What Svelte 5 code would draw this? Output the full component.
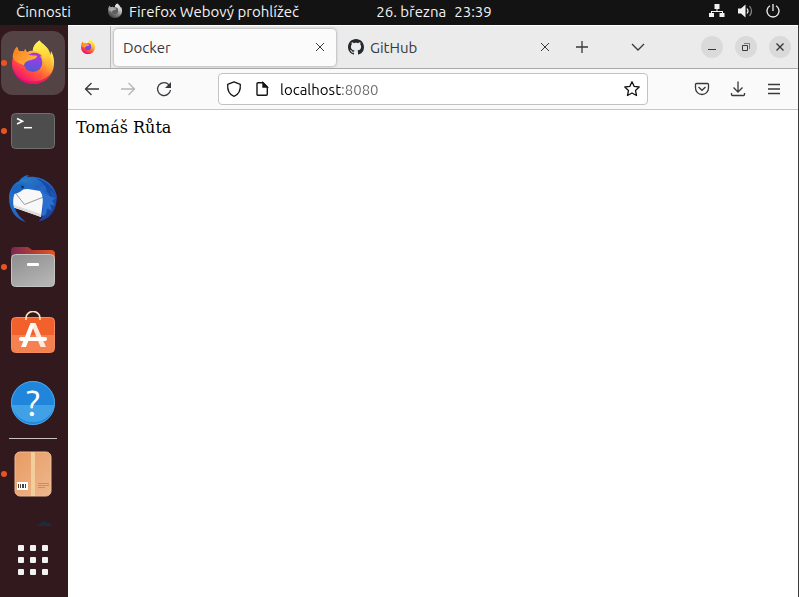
<script>
  let address = $state('localhost:8080');
  const dots = [0, 1, 2, 3, 4, 5, 6, 7, 8];
</script>

{#snippet firefox(size, id)}
  <svg width={size} height={size} viewBox="0 0 48 48" aria-hidden="true">
    <defs>
      <linearGradient id="{id}-body" x1="0.85" y1="0.1" x2="0.25" y2="0.95">
        <stop offset="0.1" stop-color="#fff44f" />
        <stop offset="0.35" stop-color="#ffb035" />
        <stop offset="0.58" stop-color="#ff6b35" />
        <stop offset="0.8" stop-color="#ff3750" />
        <stop offset="1" stop-color="#e8117f" />
      </linearGradient>
      <linearGradient id="{id}-flame" x1="0.4" y1="0" x2="0.6" y2="1">
        <stop offset="0" stop-color="#fff44f" />
        <stop offset="0.5" stop-color="#ffd53d" />
        <stop offset="1" stop-color="#ff9a30" stop-opacity="0" />
      </linearGradient>
      <radialGradient id="{id}-globe" cx="0.65" cy="0.1" r="0.9">
        <stop offset="0" stop-color="#b833e1" />
        <stop offset="0.5" stop-color="#7d47e3" />
        <stop offset="1" stop-color="#5658cf" />
      </radialGradient>
      <linearGradient id="{id}-snout" x1="0" y1="0" x2="1" y2="0.6">
        <stop offset="0" stop-color="#ff7a1c" />
        <stop offset="1" stop-color="#ffb13a" />
      </linearGradient>
    </defs>
    <path fill="url(#{id}-body)" d="M30.500 1.500C33 5 38 7 40 12l1.500 4 .5-4c2.500 4 3.500 9 3 14-1 11-10 19-21 19S3 36 3 24.500c0-4 1-7 3-9.500.2-2.500 1-5 2.700-7 .3 2 .8 3.500 2 4.500 1.800-.5 3.500-.4 5 .2.2-1 .5-1.800 1-2.500.2 1 .7 2 1.500 3 1.500-1 3.500-1.500 5.500-1.400C24 7 27 4 30.500 1.500z" />
    <path fill="#d90b70" opacity=".65" d="M4 30c4 9 11 12.500 20 12.500 8 0 14-3.500 18.500-9C39.500 40.500 32.500 45 24 45 14 45 6 39 4 30z" />
    <path fill="url(#{id}-flame)" d="M30.500 1.500C33 5 38 7 40 12c3 7 2 15-2 20 .5-6-1-11-4.500-14 .5-2-2-4.500-5-5.500l-4.500-.4C24 7 27 4 30.500 1.500z" />
    <circle cx="24" cy="23.700" r="9.300" fill="url(#{id}-globe)" />
    <path fill="#a935dd" d="M21 15c4-2 9-1.500 12 2.500l-2-.3 2 4c-3-3-7-4.500-12-5z" />
    <path fill="url(#{id}-snout)" d="M3.600 18C4 13.500 5.500 10 8 7.500c0 2 .8 3.500 2 4.800 2-.6 3.500-.4 5 .2.2-1 .5-2 1.300-2.800.2 3 1.500 4.500 4.200 6.300 3 .8 7 0 7.500.9 0 2-2 3-4.500 3.600-2 .8-3.500 1-4.500 1.200-2 .8-3.500 2-4 4.500C13 25 6 24 3.600 18z" />
  </svg>
{/snippet}

{#snippet cross(size)}
  <svg width={size} height={size} viewBox="0 0 10 10" fill="none" stroke="currentColor" aria-hidden="true"><path d="M1 1l8 8M9 1L1 9" /></svg>
{/snippet}

<div class="desktop">
  <header class="panel">
    <button class="activities">Činnosti</button>
    <button class="app-menu">
      <span class="grey">{@render firefox(16, 'panel')}</span>
      Firefox Webový prohlížeč
    </button>
    <button class="clock"><span>26. března</span><span>23:39</span></button>
    <button class="status" aria-label="Systém">
      <svg width="16" height="14" viewBox="0 0 16 14" fill="#f2f2f2">
        <path d="M5.500 0h5v5h-5zM0 9h5v4H0zM10.500 9h5v4h-5zM7.500 5h1v2.500h-1zM2 7h12v2h-1V8H3v1H2z" />
      </svg>
      <svg width="15" height="14" viewBox="0 0 15 14" fill="none" stroke="#f2f2f2">
        <path fill="#f2f2f2" stroke="none" d="M0 4.500h3L7.500 0.500v13L3 9.500H0z" />
        <path stroke-width="1.200" d="M9 4.500q2 2.500 0 5" />
        <path stroke="#8b8b8b" stroke-width="1.200" d="M11.500 2q4 5 0 10" />
      </svg>
      <svg width="14" height="14" viewBox="0 0 14 14" fill="none" stroke="#f2f2f2" stroke-width="1.300">
        <path d="M7 0v7M4 1.800a6 6 0 1 0 6 0" />
      </svg>
    </button>
  </header>

  <div class="workspace">
    <nav class="dock" aria-label="Dok">
      <button class="tile running active" aria-label="Firefox">{@render firefox(48, 'dock')}</button>

      <button class="tile running" aria-label="Terminál">
        <svg width="48" height="48" viewBox="0 0 48 48">
          <rect x="2.500" y="6.500" width="43" height="35" rx="4" fill="#4d4d4d" stroke="#6f6f6f" />
          <path d="M8 11.500l5.500 2.700L8 17" fill="none" stroke="#fff" stroke-width="1.600" />
          <path d="M15 20.700h8" stroke="#fff" stroke-width="1.500" />
        </svg>
      </button>

      <button class="tile" aria-label="Thunderbird">
        <svg width="48" height="48" viewBox="0 0 48 48">
          <defs>
            <linearGradient id="bird" x1="0" y1="0" x2="1" y2="1">
              <stop offset="0" stop-color="#1c75cd" />
              <stop offset="0.5" stop-color="#2468c8" />
              <stop offset="1" stop-color="#16328e" />
            </linearGradient>
            <linearGradient id="crest" x1="0" y1="0" x2="1" y2="0.6">
              <stop offset="0" stop-color="#2f7fc4" />
              <stop offset="1" stop-color="#1f5dc0" />
            </linearGradient>
          </defs>
          <path fill="url(#bird)" d="M20 0l-2 2C33 0 46 9 48 22c-.5 3-.5 6-1.500 9-2 8-8 14-17 15.500 2-2 4-4 4-6L6 33c1 5 6 10 11 14C8 45 0 36 0 23 0 15 4 9 10 6c2-3 6-6 10-6z" />
          <path fill="url(#crest)" d="M11 6c9-5 22-3 29 6-5-2-9-1-12 3-4-5-9-7-17-9z" />
          <path fill="#174ba8" d="M27 3.500c8 1 16 7 19 16l-5-4 2 7-5-6c-1-6-5-10-11-13z" />
          <path fill="#f8f8f8" d="M6 17.500c5-2 8-3.500 13-3.500l12 2 3.500 6L32 42 5 32.500c-1.500-5-1-10 1-15z" />
          <path fill="#dcdcdc" d="M5 30l27 9v3L5 32.500z" />
          <path fill="none" stroke="#989898" stroke-width="1" d="M6 17.500L15.500 29.500l19-7.500" />
          <path fill="#2a6fcf" d="M32 15c4 4 9 7 15 8l-4 2.500 3 5-5-1 2 6-5-2-1 6-4.500 2c2-8 2-18-.5-26.500z" />
          <path fill="#1b66c0" d="M3 13c3-4 8-5 13-3-1 5-5 8-12 9z" />
          <circle cx="13.500" cy="12" r="1.300" fill="#222c40" />
        </svg>
      </button>

      <button class="tile running" aria-label="Soubory">
        <svg width="48" height="48" viewBox="0 0 48 48">
          <defs>
            <linearGradient id="folder"><stop offset="0" stop-color="#7a2750" /><stop offset="1" stop-color="#e95420" /></linearGradient>
            <linearGradient id="drawer" x1="0" y1="0" x2="0.6" y2="1"><stop offset="0" stop-color="#8d8d8d" /><stop offset="1" stop-color="#b3b3b3" /></linearGradient>
          </defs>
          <path fill="url(#folder)" d="M2 8a4 4 0 0 1 4-4h13l4 3h19a4 4 0 0 1 4 4v12H2z" />
          <rect x="2.500" y="11.500" width="43" height="32" rx="4" fill="url(#drawer)" stroke="#c4c4c4" />
          <rect x="18" y="20" width="12" height="3" rx="1" fill="#fff" />
        </svg>
      </button>

      <button class="tile" aria-label="Software">
        <svg width="48" height="48" viewBox="0 0 48 48">
          <rect x="2.500" y="6.500" width="43" height="35" rx="4" fill="#f2612b" stroke="#f58a5e" />
          <path fill="#f58050" d="M3 24h42v14a3 3 0 0 1-3 3H6a3 3 0 0 1-3-3z" />
          <path d="M17 9V7a7 6.500 0 0 1 14 0v2" fill="none" stroke="#fbe3b7" stroke-width="1.700" />
          <path d="M22 12h4.500L37 36h-5.500z" fill="#ffe9df" />
          <path d="M21.500 12H26l-9 24h-5z" fill="#fff" />
          <rect x="10" y="26" width="28" height="4" rx="2" fill="#fff" />
        </svg>
      </button>

      <button class="tile" aria-label="Nápověda">
        <svg width="48" height="48" viewBox="0 0 48 48">
          <circle cx="24" cy="24" r="22" fill="#1f86dc" />
          <path d="M2.500 26h43a22 22 0 0 1-43 0z" fill="#41a1e7" />
          <circle cx="24" cy="24" r="21.500" fill="none" stroke="#4ba6e8" />
          <text x="24" y="37" text-anchor="middle" class="question">?</text>
        </svg>
      </button>

      <hr />

      <button class="tile running" aria-label="Balíček">
        <svg width="48" height="48" viewBox="0 0 48 48">
          <defs><linearGradient id="box" x1="0" y1="0" x2="1" y2="1"><stop offset="0" stop-color="#e99b62" /><stop offset="1" stop-color="#edb78e" /></linearGradient></defs>
          <rect x="6" y="2" width="36" height="44" rx="5" fill="url(#box)" stroke="#f0bd95" />
          <path fill="#f2cf9a" d="M22 2h4v44h-4z" />
          <path fill="#fff" d="M8 32h11v8H8z" />
          <path fill="#444" d="M9 34h1v4H9zM11 34h1v4h-1zM13 34h2v4h-2zM16 34h1v4h-1z" />
          <path stroke="#d68a55" d="M29 33.500h11M29 35.500h11M29 37.500h7" />
        </svg>
      </button>

      <div class="peek" aria-hidden="true">
        <svg width="48" height="16" viewBox="0 0 48 16">
          <path fill="#1d2b3e" d="M28 16c2-2 4-3 7-5 2 1 6 2 9 5z" />
        </svg>
      </div>

      <button class="tile apps" aria-label="Zobrazit aplikace">
        {#each dots as dot (dot)}<span></span>{/each}
      </button>
    </nav>

    <section class="browser">
      <div class="tabs">
        <button class="pinned" aria-label="Firefox View">{@render firefox(16, 'view')}</button>
        <div class="tab selected">
          <button class="title">Docker</button>
          <button class="icon small" aria-label="Zavřít panel">{@render cross(10)}</button>
        </div>
        <div class="tab">
          <button class="title">
            <svg width="16" height="16" viewBox="0 0 16 16" fill="#24292f" aria-hidden="true">
              <path d="M8 0C3.580 0 0 3.580 0 8c0 3.540 2.290 6.530 5.470 7.590.4.070.55-.17.55-.38 0-.19-.01-.82-.01-1.490-2.010.37-2.530-.49-2.690-.94-.09-.23-.48-.94-.82-1.130-.28-.15-.68-.52-.01-.53.63-.01 1.080.58 1.230.82.72 1.210 1.870.87 2.330.66.07-.52.28-.87.51-1.070-1.780-.2-3.640-.89-3.640-3.950 0-.87.31-1.590.82-2.150-.08-.2-.36-1.020.08-2.120 0 0 .67-.21 2.200.82.64-.18 1.320-.27 2-.27s1.360.09 2 .27c1.530-1.040 2.200-.82 2.200-.82.44 1.100.16 1.920.08 2.120.51.56.82 1.270.82 2.150 0 3.070-1.870 3.750-3.650 3.950.29.25.54.73.54 1.480 0 1.070-.01 1.930-.01 2.200 0 .21.15.46.55.38A8.010 8.010 0 0 0 16 8c0-4.420-3.580-8-8-8z" />
            </svg>
            GitHub
          </button>
          <button class="icon small" aria-label="Zavřít panel">{@render cross(10)}</button>
        </div>
        <button class="icon new-tab" aria-label="Nový panel">
          <svg width="12" height="12" viewBox="0 0 12 12" fill="none" stroke="currentColor" stroke-width="1.300"><path d="M6 0v12M0 6h12" /></svg>
        </button>
        <button class="icon list-tabs" aria-label="Seznam panelů">
          <svg width="14" height="8" viewBox="0 0 14 8" fill="none" stroke="currentColor" stroke-width="1.300"><path d="M1 1l6 6 6-6" /></svg>
        </button>
        <div class="window-buttons">
          <button aria-label="Minimalizovat">
            <svg width="10" height="10" viewBox="0 0 10 10"><path d="M1 7.500h8" stroke="currentColor" /></svg>
          </button>
          <button aria-label="Obnovit">
            <svg width="10" height="10" viewBox="0 0 10 10" fill="none" stroke="currentColor"><path d="M1.500 3.500h5v5h-5z" /><path d="M3 1.500h5.500V7" opacity=".6" /></svg>
          </button>
          <button aria-label="Zavřít">
            <svg width="10" height="10" viewBox="0 0 10 10" stroke="currentColor" stroke-width="1.400"><path d="M1.500 1.500l7 7M8.500 1.500l-7 7" /></svg>
          </button>
        </div>
      </div>

      <div class="toolbar">
        <div class="group">
          <button class="icon" aria-label="Zpět">
            <svg width="16" height="16" viewBox="0 0 16 16" fill="none" stroke="currentColor" stroke-width="1.300"><path d="M15 8H1.500M7.500 2l-6 6 6 6" /></svg>
          </button>
          <button class="icon" aria-label="Vpřed" disabled>
            <svg width="16" height="16" viewBox="0 0 16 16" fill="none" stroke="currentColor" stroke-width="1.300"><path d="M1 8h13.500M8.500 2l6 6-6 6" /></svg>
          </button>
          <button class="icon" aria-label="Obnovit stránku">
            <svg width="16" height="16" viewBox="0 0 16 16" fill="none" stroke="currentColor" stroke-width="1.300"><path d="M13 3.800A6.500 6.500 0 1 0 14.500 9" /><path fill="currentColor" stroke="none" d="M15 1v6H9z" /></svg>
          </button>
        </div>
        <form class="address" onsubmit={(event) => event.preventDefault()}>
          <button type="button" class="icon" aria-label="Ochrana">
            <svg width="16" height="16" viewBox="0 0 16 16" fill="none" stroke="currentColor" stroke-width="1.300"><path d="M8 .8l6.300 2.500C14.700 8.500 13 13.500 8 15.300 3 13.500 1.300 8.500 1.700 3.300z" stroke-linejoin="round" /></svg>
          </button>
          <button type="button" class="icon" aria-label="Informace o stránce">
            <svg width="16" height="16" viewBox="0 0 16 16" fill="none" stroke="currentColor" stroke-width="1.400"><path d="M4 1.700h5l4.300 4.300v7.200a1 1 0 0 1-1 1H4a1 1 0 0 1-1-1V2.700a1 1 0 0 1 1-1z" /><path fill="currentColor" d="M9 1.700V6h4.300z" /></svg>
          </button>
          <input type="text" aria-label="Adresa" bind:value={address} />
          <button type="button" class="icon" aria-label="Přidat do záložek">
            <svg width="16" height="16" viewBox="0 0 16 16" fill="none" stroke="currentColor" stroke-width="1.300" stroke-linejoin="round"><path d="M8 .8l2.200 4.600 5 .6-3.700 3.500 1 5L8 12l-4.500 2.500 1-5L.8 6l5-.6z" /></svg>
          </button>
        </form>
        <div class="group">
          <button class="icon" aria-label="Pocket">
            <svg width="16" height="16" viewBox="0 0 16 16" fill="none" stroke="currentColor" stroke-width="1.300"><path d="M2.500 2.500h11a1 1 0 0 1 1 1V7a6.500 6.500 0 0 1-13 0V3.500a1 1 0 0 1 1-1z" /><path d="M4.500 6L8 9.300 11.500 6" /></svg>
          </button>
          <button class="icon" aria-label="Stahování">
            <svg width="16" height="16" viewBox="0 0 16 16" fill="none" stroke="currentColor" stroke-width="1.300"><path d="M8 .5v10.500M3.500 6.500L8 11l4.500-4.500M1.500 12v1.500a1 1 0 0 0 1 1h11a1 1 0 0 0 1-1V12" /></svg>
          </button>
          <button class="icon" aria-label="Nabídka">
            <svg width="12" height="16" viewBox="0 0 12 16" stroke="currentColor" stroke-width="1.300"><path d="M0 3.500h12M0 8h12M0 12.500h12" /></svg>
          </button>
        </div>
      </div>

      <main>Tomáš Růta</main>
    </section>
  </div>
</div>

<style>
  :global(body) {
    margin: 0;
  }

  .desktop {
    display: flex;
    flex-direction: column;
    min-height: 100vh;
    background: #33191d;
    font-family: Ubuntu, 'Noto Sans', sans-serif;
    font-size: 15px;
  }

  button {
    display: flex;
    align-items: center;
    justify-content: center;
    padding: 0;
    border: 0;
    background: none;
    color: inherit;
    font: inherit;
  }

  svg {
    display: block;
    flex: none;
  }

  .panel {
    display: grid;
    grid-template-columns: 5fr auto 4fr;
    grid-template-areas: 'left clock right';
    align-items: center;
    height: 25px;
    padding: 0 19px 3px 16px;
    box-sizing: border-box;
    background: #131313;
    color: #f2f2f2;
    white-space: nowrap;
  }

  .activities,
  .app-menu {
    grid-area: left;
    justify-self: start;
  }

  .app-menu {
    gap: 6px;
    margin-left: 91px;
  }

  .grey {
    filter: grayscale(1);
  }

  .clock {
    grid-area: clock;
    gap: 8px;
  }

  .status {
    grid-area: right;
    justify-self: end;
    gap: 13px;
  }

  .workspace {
    display: flex;
    flex: 1;
  }

  .dock {
    display: flex;
    flex: none;
    flex-direction: column;
    gap: 4px;
    width: 68px;
    padding: 6px 3px 5px 1px;
    box-sizing: border-box;
    background: #32191d;
  }

  .tile {
    position: relative;
    flex: none;
    width: 64px;
    height: 64px;
    border-radius: 12px;
  }

  .active {
    background: #544344;
  }

  .running::before {
    content: '';
    position: absolute;
    left: 0;
    top: 29px;
    width: 6px;
    height: 6px;
    border-radius: 50%;
    background: #e95420;
  }

  .question {
    font: 36px Ubuntu, 'Noto Sans', sans-serif;
    fill: #fff;
  }

  hr {
    width: 48px;
    height: 1px;
    margin: -1px auto;
    border: 0;
    background: #c9c2c3;
  }

  .peek {
    display: flex;
    justify-content: center;
    height: 16px;
    margin-bottom: -2px;
  }

  .apps {
    display: grid;
    grid-template-columns: repeat(3, 6px);
    gap: 6px;
    align-content: center;
    margin-top: auto;
  }

  .apps span {
    height: 6px;
    border-radius: 1px;
    background: #f2f2f2;
  }

  .browser {
    display: flex;
    flex: 1;
    flex-direction: column;
    min-width: 0;
    border-right: 1px solid #3a3a3a;
    background: #fff;
    color: #38383d;
  }

  .tabs {
    display: flex;
    align-items: center;
    height: 44px;
    box-sizing: border-box;
    border-top: 1px solid #fff;
    border-bottom: 1px solid #a9a9ac;
    background: #ebebeb;
  }

  .pinned {
    align-self: stretch;
    width: 43px;
    padding-right: 2px;
    border-right: 1px solid #b9b9b9;
  }

  .tab {
    display: flex;
    flex: 0 1 222px;
    align-items: center;
    justify-content: space-between;
    min-width: 0;
    height: 37px;
    padding: 0 6px 0 9px;
    box-sizing: border-box;
    border-radius: 4px;
  }

  .selected {
    margin: 0 3px;
    background: #fbfbfb;
    box-shadow: 0 0 3px #8e8e94;
  }

  .title {
    gap: 6px;
  }

  .icon {
    flex: none;
    width: 32px;
    height: 32px;
  }

  .icon:disabled {
    color: #b5b5b7;
  }

  .small {
    width: 20px;
    height: 20px;
  }

  .new-tab {
    margin-left: 5px;
  }

  .list-tabs {
    margin-left: 24px;
  }

  .window-buttons {
    display: flex;
    gap: 12px;
    margin-left: auto;
    padding-right: 7px;
  }

  .window-buttons button {
    width: 22px;
    height: 22px;
    border-radius: 50%;
    background: #dadada;
  }

  .toolbar {
    display: flex;
    align-items: center;
    justify-content: space-between;
    height: 41px;
    padding: 0 8px;
    box-sizing: border-box;
    border-bottom: 1px solid #c6c6c8;
    background: #fafafa;
  }

  .group {
    display: flex;
    gap: 4px;
  }

  .address {
    display: flex;
    flex: 0 1 430px;
    align-items: center;
    height: 32px;
    margin: 0 auto 0 38px;
    padding: 0 4px;
    box-sizing: border-box;
    border: 1px solid #c2c2c4;
    border-radius: 4px;
    background: #fff;
    color: #151518;
  }

  .address .icon {
    width: 22px;
    height: 28px;
  }

  .address .icon + .icon {
    margin-left: 6px;
  }

  input {
    flex: 1;
    min-width: 0;
    margin: 0 0 0 7px;
    padding: 0;
    border: 0;
    outline: 0;
    background: linear-gradient(90deg, #000 62px, #6c6c70 62px);
    background-clip: text;
    color: transparent;
    caret-color: #0c0c0d;
    font: inherit;
  }

  main {
    padding: 8px;
    color: #000;
    font: 16px/19px 'DejaVu Serif', serif;
  }
</style>
